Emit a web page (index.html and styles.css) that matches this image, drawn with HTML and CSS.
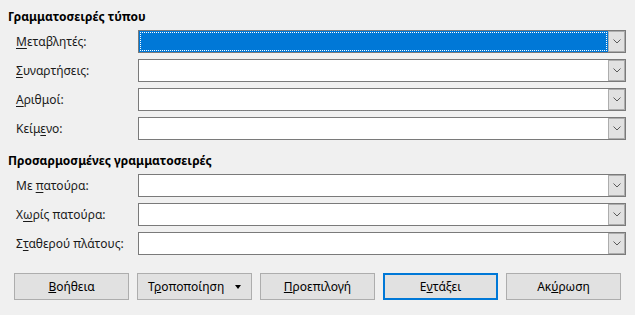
FILE: index.html
```html
<!DOCTYPE html>
<html>
  <head>
    <meta charset="utf-8">
    <title>Γραμματοσειρές</title>
    <link rel="stylesheet" href="styles.css">
  </head>
  <body>
    <div class="dialog">
      <h2 class="heading">Γραμματοσειρές τύπου</h2>
      <div class="rows">
        <label class="label"><u>Μ</u>εταβλητές:</label>
        <div class="combo focused">
          <div class="field"><div class="focus-ring"></div></div>
          <div class="drop"><svg width="8" height="5" viewBox="0 0 8 5"><path d="M0.5 0.5 L4 4 L7.5 0.5" fill="none" stroke="#5a5a5a" stroke-width="1"/></svg></div>
        </div>
        <label class="label"><u>Σ</u>υναρτήσεις:</label>
        <div class="combo">
          <div class="field"></div>
          <div class="drop"><svg width="8" height="5" viewBox="0 0 8 5"><path d="M0.5 0.5 L4 4 L7.5 0.5" fill="none" stroke="#5a5a5a" stroke-width="1"/></svg></div>
        </div>
        <label class="label"><u>Α</u>ριθμοί:</label>
        <div class="combo">
          <div class="field"></div>
          <div class="drop"><svg width="8" height="5" viewBox="0 0 8 5"><path d="M0.5 0.5 L4 4 L7.5 0.5" fill="none" stroke="#5a5a5a" stroke-width="1"/></svg></div>
        </div>
        <label class="label">Κείμ<u>ε</u>νο:</label>
        <div class="combo">
          <div class="field"></div>
          <div class="drop"><svg width="8" height="5" viewBox="0 0 8 5"><path d="M0.5 0.5 L4 4 L7.5 0.5" fill="none" stroke="#5a5a5a" stroke-width="1"/></svg></div>
        </div>
      </div>

      <h2 class="heading second">Προσαρμοσμένες γραμματοσειρές</h2>
      <div class="rows">
        <label class="label">Με <u>π</u>ατούρα:</label>
        <div class="combo">
          <div class="field"></div>
          <div class="drop"><svg width="8" height="5" viewBox="0 0 8 5"><path d="M0.5 0.5 L4 4 L7.5 0.5" fill="none" stroke="#5a5a5a" stroke-width="1"/></svg></div>
        </div>
        <label class="label">Χ<u>ω</u>ρίς πατούρα:</label>
        <div class="combo">
          <div class="field"></div>
          <div class="drop"><svg width="8" height="5" viewBox="0 0 8 5"><path d="M0.5 0.5 L4 4 L7.5 0.5" fill="none" stroke="#5a5a5a" stroke-width="1"/></svg></div>
        </div>
        <label class="label">Σ<u>τ</u>αθερού πλάτους:</label>
        <div class="combo">
          <div class="field"></div>
          <div class="drop"><svg width="8" height="5" viewBox="0 0 8 5"><path d="M0.5 0.5 L4 4 L7.5 0.5" fill="none" stroke="#5a5a5a" stroke-width="1"/></svg></div>
        </div>
      </div>

      <div class="buttons">
        <button class="btn"><u>Β</u>οήθεια</button>
        <button class="btn menu"><span>Τ<u>ρ</u>οποποίηση</span><span class="caret"></span></button>
        <button class="btn"><u>Π</u>ροεπιλογή</button>
        <button class="btn default">Ε<u>ν</u>τάξει</button>
        <button class="btn">Ακ<u>ύ</u>ρωση</button>
      </div>
    </div>
  </body>
</html>
```

FILE: styles.css
```css
html, body {
  margin: 0;
  padding: 0;
  background-color: #f0f0f0;
  color: #000;
  font-family: "Noto Sans", "Open Sans", sans-serif;
  font-size: 12px;
  overflow: hidden;
}
.dialog {
  padding: 9px 9px 0 8px;
}
.heading {
  margin: 0;
  font-size: 12px;
  font-weight: bold;
  line-height: 16px;
}
.heading.second {
  margin-top: 13px;
}
.rows {
  display: grid;
  grid-template-columns: 122px 1fr;
  grid-auto-rows: 23px;
  row-gap: 6px;
  margin-top: 5px;
  padding-left: 8px;
}
.label {
  display: block;
  line-height: 23px;
  white-space: nowrap;
  color: #1a1a1a;
}
.label u {
  text-underline-offset: 2px;
}
.combo {
  display: flex;
  border: 1px solid #7a7a7a;
  background: #fff;
}
.field {
  flex: 1;
  position: relative;
}
.combo.focused .field {
  background: #0078d7;
}
.focus-ring {
  position: absolute;
  inset: 1px;
  border: 1px dotted #000;
  outline: 1px dotted #fff;
  outline-offset: -1px;
}
.drop {
  width: 15px;
  background: #e1e1e1;
  border: 1px solid #adadad;
  display: flex;
  align-items: center;
  justify-content: center;
}
.buttons {
  display: flex;
  gap: 8px;
  margin-top: 18px;
  padding-left: 6px;
}
.btn {
  width: 115px;
  height: 27px;
  background: #e1e1e1;
  border: 1px solid #adadad;
  font-family: inherit;
  font-size: 12px;
  color: #000;
  padding: 0;
}
.btn.default {
  border: 2px solid #0078d7;
}
.btn.menu {
  display: flex;
  align-items: center;
  padding-left: 10px;
}
.caret {
  margin-left: auto;
  margin-right: 10px;
  width: 0;
  height: 0;
  border-left: 3.5px solid transparent;
  border-right: 3.5px solid transparent;
  border-top: 4px solid #000;
}
```
